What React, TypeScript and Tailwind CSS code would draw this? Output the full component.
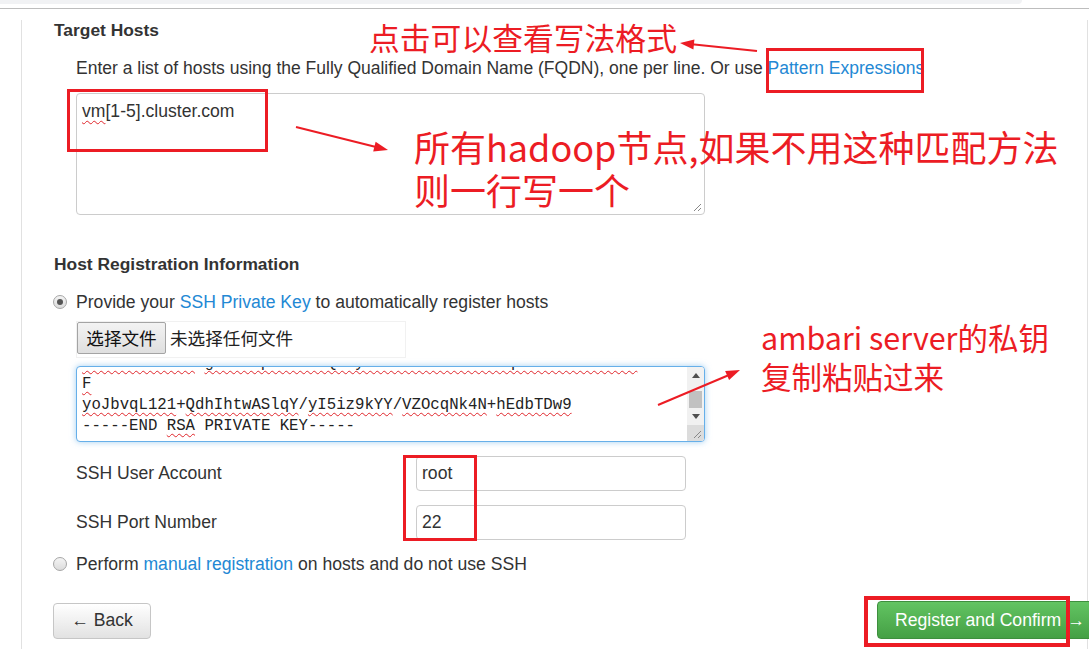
import React from "react";

const RED = "#ec1c24";
const LINK = "#2388d4";

function Wavy({ children }: { children: React.ReactNode }) {
  return (
    <span className="underline decoration-wavy decoration-[#e0262b] decoration-[1px] underline-offset-[3px]">
      {children}
    </span>
  );
}

function Grip() {
  return (
    <svg width="9" height="9" viewBox="0 0 9 9" className="absolute right-[2px] bottom-[2px]">
      <line x1="1" y1="8" x2="8" y2="1" stroke="#888" strokeWidth="1" />
      <line x1="5" y1="8" x2="8" y2="5" stroke="#888" strokeWidth="1" />
    </svg>
  );
}

function Radio({ checked }: { checked?: boolean }) {
  return (
    <span className="relative inline-flex w-[14px] h-[14px] rounded-full border border-[#a6a6a6] bg-gradient-to-b from-[#f4f4f4] to-[#dcdcdc] items-center justify-center shrink-0">
      {checked && <span className="w-[6px] h-[6px] rounded-full bg-[#555]" />}
    </span>
  );
}

export default function App() {
  const sans = { fontFamily: '"Liberation Sans", Arial, sans-serif' };
  const cjk = { fontFamily: '"Noto Sans CJK SC", "Liberation Sans", sans-serif' };
  const mono = { fontFamily: '"Liberation Mono", "Courier New", monospace' };
  return (
    <div className="relative w-[1089px] h-[649px] overflow-hidden bg-white text-[#333]" style={sans}>
      <div className="h-[4px] w-[1022px] bg-[#f1f2f4] rounded-br-[6px]" />
      <div className="mt-[4px] border-t border-[#bdbdbd]" />
      <div className="ml-[21px] w-[1067px] h-[640px] border-l border-r border-[#e1e1e1] pl-[32px]">
        <div className="mt-[11px] text-[17.4px] leading-[20px] font-bold">Target Hosts</div>
        <div className="mt-[18px] ml-[22px] text-[17.5px] leading-[20px] whitespace-nowrap">
          Enter a list of hosts using the Fully Qualified Domain Name (FQDN), one per line. Or use{" "}
          <span style={{ color: LINK }}>Pattern Expressions</span>
        </div>
        <div className="relative mt-[15px] ml-[22px] w-[629px] h-[122px] border border-[#cccccc] rounded-[4px] bg-white px-[5px] pt-[7px] text-[17.6px] leading-[20px]">
          <Wavy>vm</Wavy>[1-5].cluster.com
          <Grip />
        </div>

        <div className="mt-[39px] text-[17.4px] leading-[20px] font-bold">Host Registration Information</div>
        <div className="mt-[18px] ml-[-1px] flex items-center gap-[9px] text-[17.6px] leading-[20px]">
          <Radio checked />
          <span>
            Provide your <span style={{ color: LINK }}>SSH Private Key</span> to automatically register hosts
          </span>
        </div>
        <div className="mt-[9px] ml-[22px] w-[330px] h-[37px] border border-[#f1f1f1] flex items-start">
          <div
            className="h-[32px] w-[89px] shrink-0 border border-[#a4a4a4] rounded-[2px] bg-gradient-to-b from-[#f3f3f3] to-[#dfdfdf] flex items-center justify-center text-[17.6px] text-[#111]"
            style={cjk}
          >
            选择文件
          </div>
          <div className="ml-[4px] h-[32px] flex items-center text-[17.6px] text-[#222]" style={cjk}>
            未选择任何文件
          </div>
        </div>
        <div className="relative mt-[8px] ml-[22px] w-[629px] h-[76px] border border-[#66afe9] rounded-[4px] bg-white shadow-[0_0_6px_rgba(102,175,233,0.6)] overflow-hidden">
          <div className="mt-[-14px] pl-[5px] text-[15.7px] leading-[21px] text-[#222] whitespace-pre" style={mono}>
            <div>
              <Wavy>MIIEowIBAAKC</Wavy> <Wavy>gEAx8Kp3nRtLmQwZyVbHs2fJdUoXe9aTq4NcWiP7lGkB0r</Wavy>
            </div>
            <div>
              <Wavy>F</Wavy>
            </div>
            <div>
              <Wavy>yoJbvqL121</Wavy>+<Wavy>QdhIhtwASlqY</Wavy>/<Wavy>yI5iz9kYY</Wavy>/<Wavy>VZOcqNk4N</Wavy>+
              <Wavy>hEdbTDw9</Wavy>
            </div>
            <div>
              -----END <Wavy>RSA</Wavy> PRIVATE KEY-----
            </div>
            <div>{"\u00a0"}</div>
          </div>
          <div className="absolute right-0 top-0 w-[17px] h-full bg-[#f1f1f1] flex flex-col">
            <div className="h-[17px] flex items-center justify-center">
              <svg width="8" height="5" viewBox="0 0 8 5">
                <path d="M0 5 L4 0 L8 5 Z" fill="#505050" />
              </svg>
            </div>
            <div className="h-[24px] relative">
              <div className="absolute left-[2px] right-[2px] top-[7px] bottom-0 bg-[#c1c1c1]" />
            </div>
            <div className="h-[17px] flex items-center justify-center">
              <svg width="8" height="5" viewBox="0 0 8 5">
                <path d="M0 0 L4 5 L8 0 Z" fill="#505050" />
              </svg>
            </div>
            <div className="relative flex-1 bg-[#dcdcdc]">
              <Grip />
            </div>
          </div>
        </div>

        <div className="mt-[14px] ml-[22px] flex items-center text-[17.6px]">
          <div className="w-[340px] shrink-0">SSH User Account</div>
          <div className="w-[270px] shrink-0 h-[35px] border border-[#cccccc] rounded-[4px] flex items-center px-[5px]">root</div>
        </div>
        <div className="mt-[14px] ml-[22px] flex items-center text-[17.6px]">
          <div className="w-[340px] shrink-0">SSH Port Number</div>
          <div className="w-[270px] shrink-0 h-[35px] border border-[#cccccc] rounded-[4px] flex items-center px-[5px]">22</div>
        </div>
        <div className="mt-[14px] ml-[-1px] flex items-center gap-[9px] text-[17.6px] leading-[20px]">
          <Radio />
          <span>
            Perform <span style={{ color: LINK }}>manual registration</span> on hosts and do not use SSH
          </span>
        </div>
        <div className="mt-[28px] ml-[-1px] flex items-center">
          <div className="w-[98px] shrink-0 h-[36px] border border-[#c6c6c6] rounded-[4px] bg-gradient-to-b from-white to-[#e2e2e2] flex items-center justify-center text-[17.6px] text-[#333]">
            ← Back
          </div>
          <div className="ml-[726px] shrink-0 mt-[-1px] w-[240px] h-[38px] rounded-[4px] border border-[#3e8f3e] bg-gradient-to-b from-[#62c462] to-[#45a045] flex items-center pl-[17px] text-[17.6px] text-white whitespace-nowrap">
            Register and Confirm <span className="ml-[6px]">→</span>
          </div>
        </div>
      </div>

      {/* annotations */}
      <div className="absolute left-[67px] top-[89px] w-[201px] h-[63px] border-[3px] border-[#ec1c24]" />
      <div className="absolute left-[766px] top-[48px] w-[158px] h-[45px] border-[3px] border-[#ec1c24]" />
      <div className="absolute left-[403px] top-[455px] w-[74px] h-[86px] border-[3px] border-[#ec1c24]" />
      <div className="absolute left-[864px] top-[596px] w-[206px] h-[51px] border-[4px] border-[#ec1c24]" />

      <div className="absolute left-[369px] top-[21px] text-[30.8px] leading-[31px] whitespace-nowrap" style={{ ...cjk, color: RED }}>
        点击可以查看写法格式
      </div>
      <div className="absolute left-[414px] top-[125px] text-[36px] leading-[43px] whitespace-nowrap" style={{ ...cjk, color: RED }}>
        <div>所有hadoop节点,如果不用这种匹配方法</div>
        <div>则一行写一个</div>
      </div>
      <div className="absolute left-[761px] top-[318px] text-[30.5px] leading-[39px] whitespace-nowrap" style={{ ...cjk, color: RED }}>
        <div>ambari server的私钥</div>
        <div>复制粘贴过来</div>
      </div>

      <svg className="absolute left-0 top-0 pointer-events-none" width="1089" height="649" viewBox="0 0 1089 649">
        <g fill={RED} stroke={RED}>
          <line x1="757" y1="51" x2="692" y2="44.3" strokeWidth="2" />
          <polygon points="680,43 694.4,39.5 693.4,49.4" stroke="none" />
          <line x1="296" y1="127" x2="376" y2="147" strokeWidth="2" />
          <polygon points="388,150 373.2,151.5 375.6,141.8" stroke="none" />
          <line x1="658" y1="405" x2="729" y2="375" strokeWidth="2" />
          <polygon points="740,370 729.1,380.1 725.1,370.9" stroke="none" />
        </g>
      </svg>
    </div>
  );
}
